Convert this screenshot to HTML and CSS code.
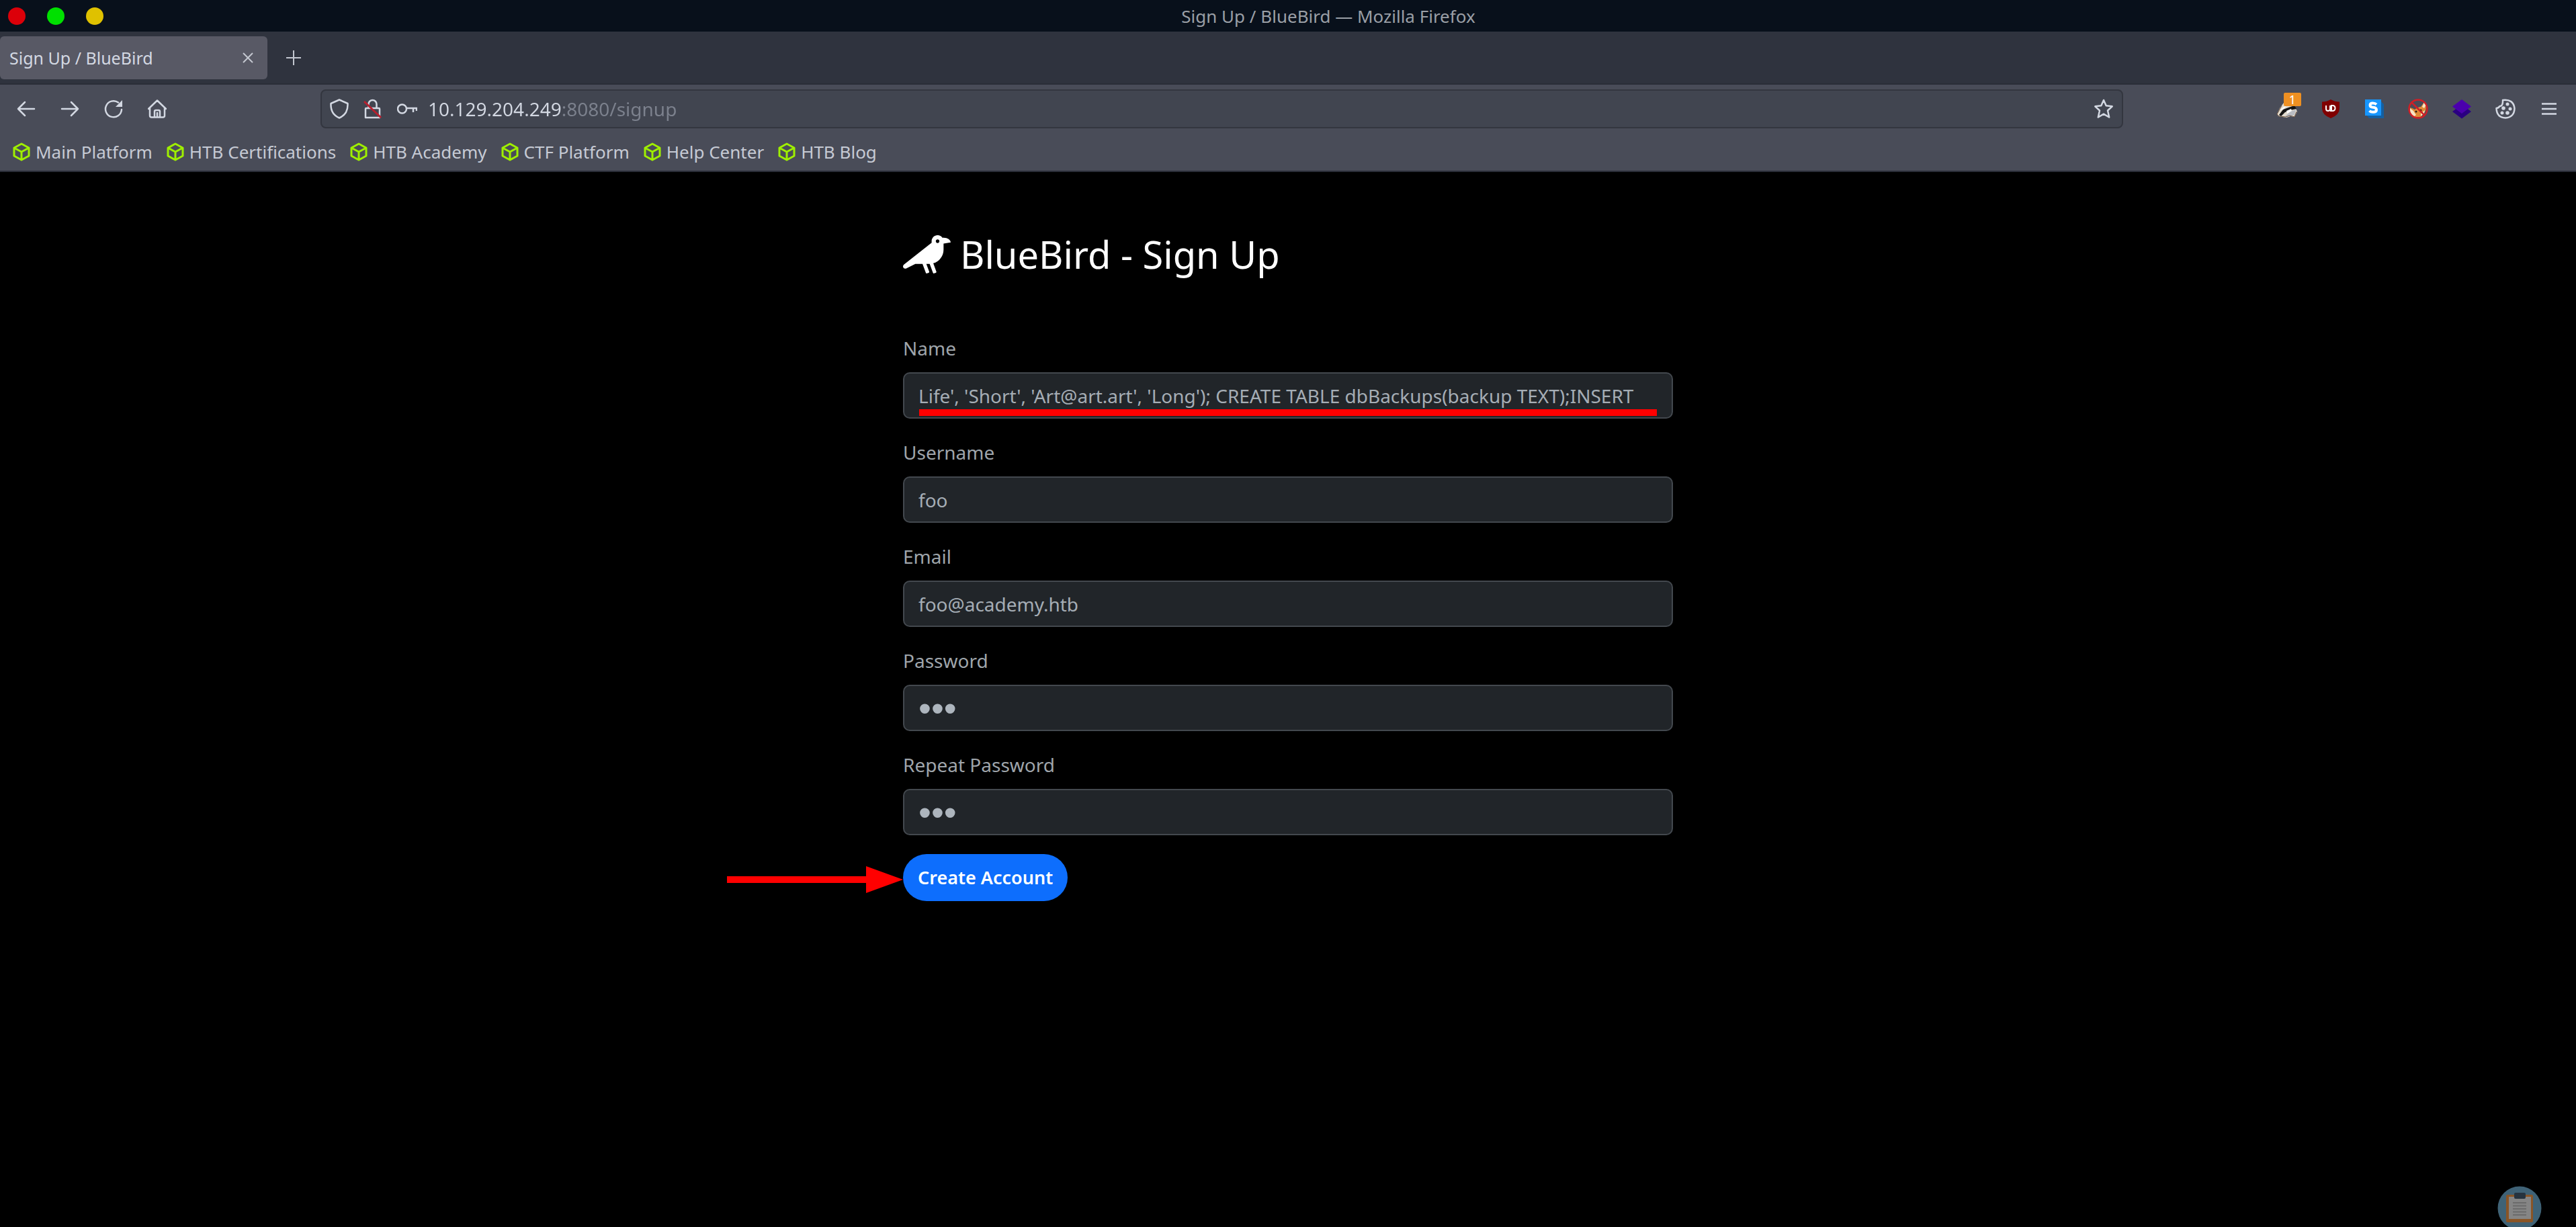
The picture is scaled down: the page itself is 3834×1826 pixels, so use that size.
FILE: index.html
```html
<!DOCTYPE html>
<html lang="en">
<head>
<meta charset="utf-8">
<title>Sign Up / BlueBird</title>
<link rel="stylesheet" href="styles.css">
</head>
<body>
<svg class="defs" aria-hidden="true">
  <symbol id="cube" viewBox="0 0 26 28">
    <path d="M13 2 24 8v12l-11 6L2 20V8zM2 8l11 6 11-6M13 14v12" fill="none" stroke="#9fef00" stroke-width="3" stroke-linejoin="round"/>
  </symbol>
</svg>

<header class="browser">
  <div class="titlebar">
    <div class="controls">
      <button class="dot dot-red" aria-label="Close window"></button>
      <button class="dot dot-green" aria-label="Maximize window"></button>
      <button class="dot dot-yellow" aria-label="Minimize window"></button>
    </div>
    <div class="window-title">Sign Up / BlueBird — Mozilla Firefox</div>
  </div>

  <div class="tabbar">
    <div class="tab">
      <span>Sign Up / BlueBird</span>
      <button class="tab-button" aria-label="Close tab">
        <svg width="16" height="16" viewBox="0 0 16 16"><path d="M1 1l14 14M15 1 1 15" class="line thin"/></svg>
      </button>
    </div>
    <button class="tab-button" aria-label="New tab">
      <svg width="22" height="22" viewBox="0 0 22 22"><path d="M11 0v22M0 11h22" class="line thin"/></svg>
    </button>
  </div>

  <nav class="navbar">
    <div class="tools">
      <button class="tool" aria-label="Back"><svg width="28" height="28" viewBox="0 0 28 28"><path d="M26 14H2M12 4 2 14l10 10" class="line round"/></svg></button>
      <button class="tool" aria-label="Forward"><svg width="28" height="28" viewBox="0 0 28 28"><path d="M2 14h24M16 4l10 10-10 10" class="line round"/></svg></button>
      <button class="tool" aria-label="Reload"><svg width="28" height="28" viewBox="0 0 28 28"><path d="M21 4.500A12 12 0 1 0 26 15" class="line round"/><path d="M27 1v10H17z" fill="#d3d8e2"/></svg></button>
      <button class="tool" aria-label="Home"><svg width="28" height="28" viewBox="0 0 28 28"><path d="M1 14 14 1.500 27 14M3 12.500V24q0 2.500 2.500 2.500h17Q25 26.500 25 24V12.500M10 26V18q0-2 2-2h4q2 0 2 2v8M14 20v6" class="line round"/></svg></button>
    </div>
    <div class="spacer"></div>
    <div class="urlbar">
      <div class="site-info">
        <svg width="28" height="30" viewBox="0 0 28 30"><path d="M14 1.500 26.500 7c.5 10-3 17.500-12.500 21.500C4.500 24.500 1 17 1.500 7z" class="line round"/></svg>
        <svg width="28" height="30" viewBox="0 0 28 30"><path d="M7.500 12V8a6 6 0 0 1 12 0v6M3 28V15q0-1 1-1h19q1 0 1 1v13z" class="line round"/><path d="M1 4 26 28" stroke="#b8202f" stroke-width="3"/></svg>
        <svg width="30" height="20" viewBox="0 0 30 20"><circle cx="7.500" cy="10" r="6.500" class="line"/><path d="M14 9h15v4M24 9v6" class="line"/></svg>
      </div>
      <input class="url" type="text" value="10.129.204.249:8080/signup" aria-label="Address" spellcheck="false">
      <button class="star" aria-label="Bookmark this page"><svg width="30" height="30" viewBox="0 0 30 30"><path d="m15 2 3.700 8.300 9 1-6.700 6.200 2.200 10L15 22.700l-8.200 4.800 2.200-10-6.700-6.200 9-1z" class="line round"/></svg></button>
    </div>
    <div class="spacer"></div>
    <div class="tools">
      <button class="tool" aria-label="Privacy Badger">
        <svg width="34" height="30" viewBox="0 0 34 30"><path d="M2 23 6 14l6-8 16 4 4 9-4 8-6-1-6 2-12-2z" fill="#e3dccf"/><path d="m5 24 6-8 8-3 9-3 3 5-9 2-8 3-6 6z" fill="#151515"/><path d="m14 26 8-7 8-3-2 8-6 2z" fill="#b9bcc2"/><path d="m6 17 6-5 4-1-5 5z" fill="#fff"/><path d="m16 18 7-3 1 3-7 4z" fill="#fff"/><path d="M9 10 2 23l3 3 10 1 6-2 7 2 3-8" fill="none" stroke="#6b5340" stroke-width="1"/></svg>
        <span class="badge">1</span>
      </button>
      <button class="tool" aria-label="uBlock Origin"><svg width="26" height="28" viewBox="0 0 26 28"><path d="M13 0q6 3.500 13 3.500V13q0 10-13 15Q0 23 0 13V3.500Q7 3.500 13 0z" fill="#800000"/><path d="M6 9v5q0 3 3 3t3-3V9M12 17h3.500q4 0 4-4t-4-4H14v7" fill="none" stroke="#fff" stroke-width="2"/></svg></button>
      <button class="tool" aria-label="Stylus"><svg width="30" height="30" viewBox="0 0 30 30"><path d="M25 4 29 8v21H7l-4-5z" fill="#155fa0"/><path d="M1 1h24v24H1z" fill="#1796ff"/><path d="M18 8.500Q16 6.500 12.500 6.500 8.500 6.500 8.500 9.500t4.500 3.300q5 .4 5 3.700t-5 3.300q-3.500 0-5.500-2" fill="none" stroke="#fff" stroke-width="4"/></svg></button>
      <button class="tool" aria-label="FoxyProxy"><svg width="30" height="30" viewBox="0 0 30 30"><path d="M3 13q4 1 7 3 5-4 9-4l6-8q3 8 1 14l-7 9H9l-5-7z" fill="#e08a35"/><path d="M3 14l5 4 4 6-4 3-5-7zM24 5l3 4-3 5-3-2zM19 22l6-5-1 5-5 4z" fill="#f7e5c4"/><circle cx="12" cy="19" r="1.500" fill="#2a1a10"/><circle cx="19" cy="17" r="1.500" fill="#2a1a10"/><circle cx="15" cy="15" r="13.500" fill="none" stroke="#cf1f26" stroke-width="2.500"/><path d="m5.500 5.500 19 19" stroke="#cf1f26" stroke-width="2.500"/></svg></button>
      <button class="tool" aria-label="Wappalyzer"><svg width="30" height="30" viewBox="0 0 30 30"><path d="m15 8.500 14 10.500-14 10.500L1 19z" fill="#2a0080"/><path d="m15 1 14 10.500L15 22 1 11.500z" fill="#4b00ad"/></svg></button>
      <button class="tool" aria-label="Cookie Editor"><svg width="30" height="30" viewBox="0 0 30 30"><path d="M11 2q16-2 17.500 12.500Q28 27.500 15 28.500 2 28 1.500 14q3 0 5-3 5 0 4.500-9z" fill="none" stroke="#d3d8e2" stroke-width="2.500" stroke-linejoin="round"/><g fill="#d3d8e2"><circle cx="18" cy="8" r="2.500"/><circle cx="12" cy="14" r="2.800"/><circle cx="22" cy="15" r="2.500"/><circle cx="10" cy="21" r="2.500"/><circle cx="18" cy="21" r="2.800"/></g></svg></button>
      <button class="tool" aria-label="Open application menu"><svg width="22" height="20" viewBox="0 0 22 20"><path d="M0 2.500h22M0 10h22M0 17.500h22" class="line"/></svg></button>
    </div>
  </nav>

  <nav class="bookmarks">
    <a href="#"><svg width="26" height="28"><use href="#cube"/></svg>Main Platform</a>
    <a href="#"><svg width="26" height="28"><use href="#cube"/></svg>HTB Certifications</a>
    <a href="#"><svg width="26" height="28"><use href="#cube"/></svg>HTB Academy</a>
    <a href="#"><svg width="26" height="28"><use href="#cube"/></svg>CTF Platform</a>
    <a href="#"><svg width="26" height="28"><use href="#cube"/></svg>Help Center</a>
    <a href="#"><svg width="26" height="28"><use href="#cube"/></svg>HTB Blog</a>
  </nav>
</header>

<main class="page">
  <h1 class="heading">
    <svg width="71" height="57" viewBox="0 0 640 512" aria-hidden="true"><path fill="#fff" d="M544 32h-16.360C513.040 12.680 490.090 0 464 0c-44.180 0-80 35.820-80 80v20.980L12.090 393.570A30.216 30.216 0 0 0 0 417.740c0 22.460 23.640 37.070 43.730 27.030L165.270 384h96.490l44.410 120.100c2.270 6.230 9.150 9.440 15.380 7.170l22.550-8.210c6.230-2.270 9.440-9.150 7.170-15.380L312.940 384H352c1.910 0 3.760-.23 5.660-.29l44.510 120.380c2.270 6.230 9.150 9.440 15.380 7.170l22.550-8.210c6.230-2.270 9.440-9.150 7.170-15.380l-41.240-111.530C485.740 352.800 544 279.260 544 192v-80l96-16c0-35.350-42.980-64-96-64zm-80 72c-13.250 0-24-10.750-24-24 0-13.260 10.750-24 24-24s24 10.740 24 24c0 13.250-10.750 24-24 24z"/></svg>
    BlueBird - Sign Up
  </h1>
  <form class="form">
    <div class="field">
      <label for="name">Name</label>
      <div class="marked">
        <input id="name" type="text" spellcheck="false" value="Life', 'Short', 'Art@art.art', 'Long'); CREATE TABLE dbBackups(backup TEXT);INSERT">
      </div>
    </div>
    <div class="field">
      <label for="username">Username</label>
      <input id="username" type="text" spellcheck="false" value="foo">
    </div>
    <div class="field">
      <label for="email">Email</label>
      <input id="email" type="email" value="foo@academy.htb">
    </div>
    <div class="field">
      <label for="password">Password</label>
      <input id="password" type="password" value="foo">
    </div>
    <div class="field">
      <label for="repeat">Repeat Password</label>
      <input id="repeat" type="password" value="foo">
    </div>
    <div class="submit">
      <svg class="arrow" width="262" height="40" viewBox="0 0 262 40" aria-hidden="true"><path d="M0 15h207V0l55 20-55 20V25H0z" fill="#f00"/></svg>
      <button class="create" type="button">Create Account</button>
    </div>
  </form>
</main>

<button class="clipboard" aria-label="Clipboard">
  <svg width="66" height="66" viewBox="0 0 66 66"><circle cx="33" cy="33" r="32.500" fill="#3f6276"/><rect x="13" y="13" width="40" height="41" rx="2" fill="#8a5526"/><path d="M17 16h33v33H17z" fill="#858585"/><path d="M23 25h20M23 29.500h20M23 34h20M23 38.500h20M23 43h20" stroke="#6b6b6b" stroke-width="2"/><rect x="25" y="10" width="17" height="9" rx="2" fill="#26333f"/></svg>
</button>
</body>
</html>
```
FILE: styles.css
```css
* { box-sizing: border-box; }

body {
  margin: 0;
  min-height: 100vh;
  background: #000;
  color: #d3d8e2;
  font: 28px/40px "Noto Sans", sans-serif;
}

button {
  display: flex;
  align-items: center;
  justify-content: center;
  padding: 0;
  border: 0;
  background: none;
  color: inherit;
  font: inherit;
}

svg { flex: none; display: block; }
.defs { position: absolute; width: 0; height: 0; }
.line { fill: none; stroke: #d3d8e2; stroke-width: 2.5; }
.thin { stroke: #c3c7d0; stroke-width: 2; }
.round { stroke-linecap: round; stroke-linejoin: round; }

/* Browser window */
.titlebar {
  display: flex;
  align-items: center;
  height: 47px;
  padding-right: 34px;
  background: #08101b;
}
.controls { display: flex; gap: 32px; padding-left: 12px; }
.dot { width: 26px; height: 26px; border-radius: 50%; }
.dot-red { background: #dc0009; }
.dot-green { background: #00e000; }
.dot-yellow { background: #dfc100; }
.window-title { flex: 1; color: #9a9fa6; font-size: 26px; text-align: center; }

.tabbar {
  display: flex;
  align-items: center;
  gap: 20px;
  height: 79px;
  border-bottom: 2px solid #2a2d37;
  background: #2f333e;
}
.tab {
  display: flex;
  align-items: center;
  justify-content: space-between;
  width: 398px;
  height: 64px;
  padding: 0 10px 0 14px;
  border-radius: 6px;
  background: #585965;
  font-size: 25px;
}
.tab-button { width: 38px; height: 38px; }

.navbar {
  display: flex;
  align-items: center;
  height: 72px;
  padding: 0 8px 0 6px;
  background: #494c58;
}
.tools { display: flex; }
.tool { position: relative; width: 65px; height: 58px; }
.spacer { flex: 0 1 211px; }
.badge {
  position: absolute;
  top: 5px;
  left: 28px;
  width: 26px;
  height: 20px;
  border-radius: 2px;
  background: #ee9022;
  color: #fff;
  font-size: 18px;
  line-height: 20px;
}
.urlbar {
  display: flex;
  flex: 1;
  align-items: center;
  gap: 16px;
  height: 58px;
  padding: 0 12px;
  border: 2px solid #33363f;
  border-radius: 8px;
  background: #414550;
}
.site-info { display: flex; align-items: center; gap: 22px; }
.url {
  flex: 1;
  padding: 0;
  border: 0;
  background: linear-gradient(to right, #d3d8e2 198px, #7c818d 198px) text;
  color: transparent;
  font: inherit;
}

.bookmarks {
  display: flex;
  align-items: center;
  gap: 21px;
  height: 58px;
  padding: 0 19px;
  border-bottom: 2px solid #2a2d37;
  background: #494c58;
  font-size: 26px;
}
.bookmarks a {
  display: flex;
  align-items: center;
  gap: 8px;
  color: #c6cad4;
  text-decoration: none;
}

/* Sign up page */
.page {
  max-width: 1146px;
  margin: 0 auto;
  padding-top: 88px;
  color: #adb5bd;
}
.heading {
  display: flex;
  align-items: center;
  gap: 14px;
  margin: 0 0 84px;
  color: #fff;
  font-weight: 400;
  font-size: 56px;
  line-height: 68px;
}
.form { display: flex; flex-direction: column; gap: 28px; }
.field { display: flex; flex-direction: column; gap: 14px; }
.field label { color: #9fa5ab; line-height: 44px; }
.field input {
  display: block;
  width: 100%;
  height: 69px;
  padding: 0 21px;
  border: 2px solid #43484e;
  border-radius: 10px;
  background: #212529;
  color: #a5adb5;
  font: inherit;
}
.field input[type="password"] { color: #adb5bd; font: 54px "Liberation Sans", sans-serif; }

.marked { position: relative; }
.marked::after {
  content: "";
  position: absolute;
  right: 24px;
  bottom: 4px;
  left: 24px;
  height: 10px;
  background: #f00;
}

.submit { position: relative; display: flex; }
.arrow { position: absolute; top: 18px; right: 100%; }
.create {
  height: 70px;
  padding: 0 22px;
  border-radius: 35px;
  background: #0d6efd;
  color: #fff;
  font-weight: 600;
  font-size: 27px;
}

.clipboard { position: fixed; right: 51px; bottom: -5px; }
```
